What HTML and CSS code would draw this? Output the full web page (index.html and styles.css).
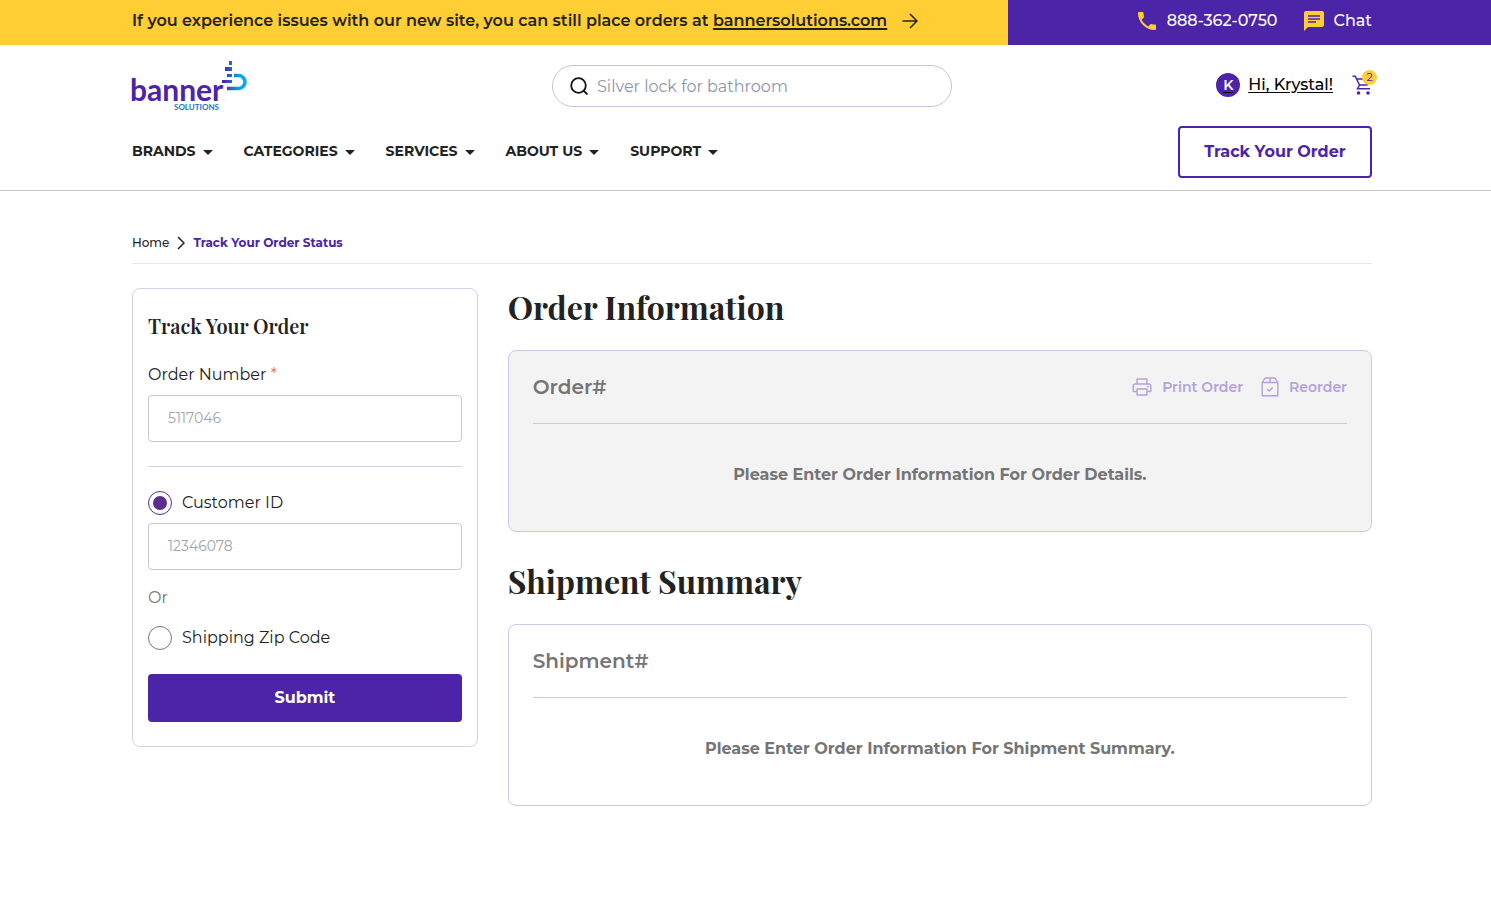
FILE: index.html
```html
<!DOCTYPE html>
<html lang="en">
  <head>
    <meta charset="UTF-8" />
    <meta name="viewport" content="width=device-width, initial-scale=1.0" />
    <title>Track Your Order Status</title>
    <link rel="stylesheet" href="styles.css">
  </head>
  <body>
    <!-- Top Bar -->
    <div class="topbar">
      <div class="topbar-notice">
        <p>If you experience issues with our new site, you can still place orders at <a href="#">bannersolutions.com</a></p>
        <svg width="16" height="16" viewBox="0 0 16 16" fill="none" stroke="#222" stroke-width="1.5">
          <path d="M0.5 8H15M8 1l7 7-7 7" />
        </svg>
      </div>
      <div class="topbar-contact">
        <a href="#">
          <svg width="24" height="24" viewBox="0 0 24 24" fill="#ffcd34">
            <path d="M6.6 10.8c1.4 2.8 3.8 5.1 6.6 6.6l2.2-2.2c.3-.3.7-.4 1-.2 1.1.4 2.3.6 3.6.6.6 0 1 .4 1 1V20c0 .6-.4 1-1 1C10.600 21 3 13.400 3 4c0-.6.500-1 1-1h3.500c.6 0 1 .4 1 1 0 1.200.200 2.400.6 3.600.1.300 0 .7-.2 1z" />
          </svg>
          888-362-0750
        </a>
        <a href="#">
          <svg width="24" height="24" viewBox="0 0 24 24">
            <path fill="#ffcd34" d="M20 2H4c-1.100 0-2 .9-2 2v18l4-4h14c1.100 0 2-.9 2-2V4c0-1.100-.9-2-2-2z" />
            <path stroke="#4b24a8" stroke-width="1.600" d="M6 7h12M6 10h12M6 13h8" />
          </svg>
          Chat
        </a>
      </div>
    </div>

    <!-- Header -->
    <header class="header">
      <div class="header-top">
        <a class="logo" href="#" aria-label="banner solutions">
          <svg width="116" height="50" viewBox="0 0 116 50">
            <defs>
              <linearGradient id="mark" gradientUnits="userSpaceOnUse" x1="92" y1="0" x2="108" y2="0">
                <stop offset="0" stop-color="#4b24a8" />
                <stop offset="0.5" stop-color="#1f72c4" />
                <stop offset="1" stop-color="#06a9f1" />
              </linearGradient>
            </defs>
            <text class="logo-name" x="-2" y="40">banner</text>
            <text class="logo-sub" x="42" y="49">SOLUTIONS</text>
            <text class="logo-tm" x="90" y="39">TM</text>
            <g fill="url(#mark)">
              <rect x="97" y="0" width="3" height="4" />
              <rect x="93" y="6" width="7" height="4" />
              <rect x="95" y="13" width="5" height="3" />
              <rect x="90" y="19" width="10" height="3" />
            </g>
            <path d="M102 14.500h4.500a6.500 6.500 0 0 1 0 13H95" fill="none" stroke="url(#mark)" stroke-width="3.600" />
          </svg>
        </a>
        <form class="search">
          <svg width="18" height="18" viewBox="0 0 18 18" fill="none" stroke="#111" stroke-width="1.800">
            <circle cx="8.500" cy="8.500" r="7.300" />
            <path d="M13.500 13.500l4 4" />
          </svg>
          <input type="text" placeholder="Silver lock for bathroom" aria-label="Search" />
        </form>
        <div class="account">
          <a class="account-user" href="#">
            <span class="avatar">K</span>
            <span>Hi, Krystal!</span>
          </a>
          <a class="cart" href="#" aria-label="Cart">
            <svg width="20" height="20" viewBox="0 0 20 20" fill="none" stroke="#4b24a8" stroke-width="1.500">
              <path d="M0.500 1.200h2.700l4.300 8.800h7.500l3.500-6.500M5 4h11M7.500 10l-2 3.800h12.500" />
              <circle cx="6.500" cy="18" r="1.800" fill="#4b24a8" stroke="none" />
              <circle cx="16" cy="18" r="1.800" fill="#4b24a8" stroke="none" />
            </svg>
            <span class="cart-count">2</span>
          </a>
        </div>
      </div>
      <div class="header-bottom">
        <nav class="nav">
          <a href="#">BRANDS</a>
          <a href="#">CATEGORIES</a>
          <a href="#">SERVICES</a>
          <a href="#">ABOUT US</a>
          <a href="#">SUPPORT</a>
        </nav>
        <button type="button" class="track-button">Track Your Order</button>
      </div>
    </header>

    <main class="main">
      <nav class="breadcrumb" aria-label="Breadcrumb">
        <a href="#">Home</a>
        <svg width="8" height="14" viewBox="0 0 8 14" fill="none" stroke="#222" stroke-width="1.500">
          <path d="M1 1l6 6-6 6" />
        </svg>
        <span>Track Your Order Status</span>
      </nav>

      <div class="columns">
        <!-- Order Lookup -->
        <form class="lookup">
          <h2>Track Your Order</h2>
          <label for="order-number">Order Number <span class="required">*</span></label>
          <input type="text" id="order-number" class="field" placeholder="5117046" />
          <hr />
          <div class="option">
            <input type="radio" name="lookup" id="customer-id" checked />
            <label for="customer-id">Customer ID</label>
          </div>
          <input type="text" class="field" placeholder="12346078" aria-label="Customer ID" />
          <p class="or">Or</p>
          <div class="option">
            <input type="radio" name="lookup" id="zip-code" />
            <label for="zip-code">Shipping Zip Code</label>
          </div>
          <button type="submit" class="submit">Submit</button>
        </form>

        <!-- Results -->
        <div class="results">
          <section>
            <h1>Order Information</h1>
            <div class="panel panel-disabled">
              <div class="panel-head">
                <h3>Order#</h3>
                <div class="panel-actions">
                  <button type="button" disabled>
                    <svg width="20" height="18" viewBox="0 0 20 18" fill="none" stroke="currentColor" stroke-width="1.400" stroke-linejoin="round">
                      <path d="M5 6V1h10v5M5 13.500H1.200V8q0-2 2-2h13.600q2 0 2 2v5.500H15M5 11h10v6H5zM15 8.500h1.500" />
                    </svg>
                    Print Order
                  </button>
                  <button type="button" disabled>
                    <svg width="18" height="20" viewBox="0 0 18 20" fill="none" stroke="currentColor" stroke-width="1.400" stroke-linejoin="round">
                      <path d="M1.200 5.500L4 1h10l2.800 4.500V18.800H1.200zM1.200 5.500h15.600M9 1v4.500M6.200 12l2 2 3.600-3.600" />
                    </svg>
                    Reorder
                  </button>
                </div>
              </div>
              <p class="panel-message">Please Enter Order Information For Order Details.</p>
            </div>
          </section>
          <section>
            <h1>Shipment Summary</h1>
            <div class="panel">
              <div class="panel-head">
                <h3>Shipment#</h3>
              </div>
              <p class="panel-message">Please Enter Order Information For Shipment Summary.</p>
            </div>
          </section>
        </div>
      </div>
    </main>
  </body>
</html>
```
FILE: styles.css
```css
/* General Styling */
* {
  box-sizing: border-box;
}

body {
  margin: 0;
  font-family: Montserrat, Inter, sans-serif;
  font-size: 16px;
  line-height: 24px;
  color: #222;
  background: #fff;
}

h1,
h2,
h3,
p {
  margin: 0;
}

a {
  color: inherit;
  text-decoration: none;
}

input,
button {
  font-family: inherit;
}

svg {
  flex-shrink: 0;
}

/* Top Bar */
.topbar {
  display: flex;
  min-height: 45px;
  font-weight: 500;
}

.topbar-notice {
  flex: 1;
  display: flex;
  align-items: center;
  gap: 15px;
  padding: 0 24px 4px 132px;
  font-weight: 600;
  background: #ffcd34;
}

.topbar-notice a {
  text-decoration: underline;
  text-decoration-thickness: 2px;
  text-underline-offset: 2px;
}

.topbar-contact {
  display: flex;
  align-items: center;
  justify-content: flex-end;
  gap: 24px;
  width: 483px;
  padding: 0 119px 4px 24px;
  color: #fff;
  background: #4b24a8;
}

.topbar-contact a {
  display: flex;
  align-items: center;
  gap: 8px;
}

/* Header */
.header {
  padding: 16px 119px 12px 132px;
  border-bottom: 1px solid #ccc;
}

.header-top {
  display: grid;
  grid-template-columns: 1fr 400px 1fr;
  align-items: center;
}

.logo svg {
  display: block;
  overflow: visible;
}

.logo-name {
  font-family: Lato, sans-serif;
  font-size: 30px;
  font-weight: bold;
  fill: #4b24a8;
}

.logo-sub {
  font-family: Lato, sans-serif;
  font-size: 8px;
  font-weight: bold;
  fill: #1f72c4;
}

.logo-tm {
  font-size: 2px;
  fill: #4b24a8;
}

.search {
  display: flex;
  align-items: center;
  gap: 9px;
  height: 42px;
  padding: 0 17px;
  border: 1px solid #c9c2e0;
  border-radius: 21px;
}

.search input {
  flex: 1;
  min-width: 0;
  padding: 0;
  border: 0;
  outline: 0;
  font-size: 16px;
}

.search input::placeholder {
  color: #8e95a9;
}

.account {
  display: flex;
  align-items: center;
  justify-content: flex-end;
  gap: 19px;
  padding-bottom: 2px;
}

.account-user {
  display: flex;
  align-items: center;
  gap: 8px;
  font-weight: 500;
  color: #000;
  text-decoration: underline;
  text-underline-offset: 2px;
}

.avatar {
  width: 24px;
  height: 24px;
  border-radius: 50%;
  font-size: 14px;
  font-weight: 600;
  text-align: center;
  color: #fff;
  background: #4b24a8;
}

.cart {
  position: relative;
  display: flex;
}

.cart-count {
  position: absolute;
  top: -5px;
  right: -5px;
  width: 15px;
  height: 15px;
  border-radius: 50%;
  font-size: 11px;
  line-height: 15px;
  text-align: center;
  color: #4b24a8;
  background: #ffcd34;
}

.header-bottom {
  display: flex;
  align-items: center;
  justify-content: space-between;
  margin-top: 15px;
}

.nav {
  display: flex;
  gap: 31px;
  padding-bottom: 2px;
  font-size: 14px;
  font-weight: 700;
}

.nav a {
  display: flex;
  align-items: center;
  gap: 7px;
}

/* Dropdown arrow */
.nav a::after {
  content: "";
  margin-top: 2px;
  border: 5px solid transparent;
  border-top-color: #222;
  border-bottom: 0;
}

.track-button {
  width: 194px;
  height: 52px;
  padding: 0 0 2px;
  border: 2px solid #4b24a8;
  border-radius: 4px;
  font-size: 16px;
  font-weight: 700;
  color: #4b24a8;
  background: #fff;
}

/* Main */
.main {
  padding: 40px 119px 100px 132px;
}

.breadcrumb {
  display: flex;
  align-items: center;
  gap: 8px;
  padding-bottom: 8px;
  border-bottom: 1px solid #e8e8e8;
  font-size: 12px;
  font-weight: 500;
}

.breadcrumb span {
  font-weight: 700;
  color: #4b24a8;
}

.columns {
  display: grid;
  grid-template-columns: 2fr 5fr;
  gap: 30px;
  align-items: start;
  margin-top: 24px;
}

/* Order Lookup */
.lookup {
  display: flex;
  flex-direction: column;
  padding: 24px 15px;
  border: 1px solid #d6d0ea;
  border-radius: 8px;
}

.lookup h2 {
  margin-bottom: 24px;
  font-family: "Playfair Display", "Liberation Serif", serif;
  font-size: 20px;
  font-weight: 600;
  line-height: 26px;
}

.required {
  color: #e07b39;
}

.field {
  width: 100%;
  height: 47px;
  padding: 0 19px 2px;
  border: 1px solid #c8c8c8;
  border-radius: 4px;
  font-size: 14px;
}

.field::placeholder {
  color: #a0a4ab;
}

label + .field {
  margin-top: 8px;
}

.lookup hr {
  width: 100%;
  margin: 24px 0;
  border: 0;
  border-top: 1px solid #d6d0ea;
}

.option {
  display: flex;
  align-items: center;
  gap: 10px;
}

.option + .field {
  margin-top: 8px;
}

.option input {
  appearance: none;
  width: 24px;
  height: 24px;
  margin: 0;
  padding: 4px;
  border: 1px solid #757575;
  border-radius: 50%;
}

.option input:checked {
  border-color: #5c2d91;
  background: #5c2d91 content-box;
}

.or {
  margin: 16px 0;
  color: #757575;
}

.submit {
  height: 48px;
  margin-top: 24px;
  padding: 0 0 2px;
  border: 0;
  border-radius: 4px;
  font-size: 16px;
  font-weight: 700;
  color: #fff;
  background: #4b24a8;
}

/* Results */
.results {
  display: flex;
  flex-direction: column;
  gap: 30px;
}

.results h1 {
  margin-bottom: 24px;
  font-family: "Playfair Display", "Liberation Serif", serif;
  font-size: 32px;
  line-height: 38px;
}

.panel {
  padding: 24px;
  border: 1px solid #cec8e6;
  border-radius: 8px;
  color: #757575;
}

.panel-disabled {
  background: #f3f3f3;
}

.panel-head {
  display: flex;
  align-items: center;
  justify-content: space-between;
  padding-bottom: 24px;
  border-bottom: 1px solid #cec8e6;
}

.panel-head h3 {
  font-size: 20px;
  font-weight: 600;
}

.panel-actions {
  display: flex;
  gap: 18px;
}

.panel-actions button {
  display: flex;
  align-items: center;
  gap: 10px;
  padding: 0;
  border: 0;
  font-size: 14px;
  font-weight: 600;
  color: #b3a2db;
  background: none;
}

.panel-message {
  padding: 39px 0 20px;
  font-weight: 700;
  text-align: center;
}

/* Small screens */
@media (max-width: 1100px) {
  .topbar,
  .header-bottom {
    flex-wrap: wrap;
  }

  .topbar-notice,
  .topbar-contact,
  .header,
  .main {
    padding-left: 16px;
    padding-right: 16px;
  }

  .topbar-contact {
    width: 100%;
    min-height: 45px;
  }

  .header-top {
    grid-template-columns: auto 1fr auto;
    gap: 16px;
  }

  .nav {
    flex-wrap: wrap;
    gap: 16px;
  }

  .columns {
    grid-template-columns: 1fr;
  }
}
```
